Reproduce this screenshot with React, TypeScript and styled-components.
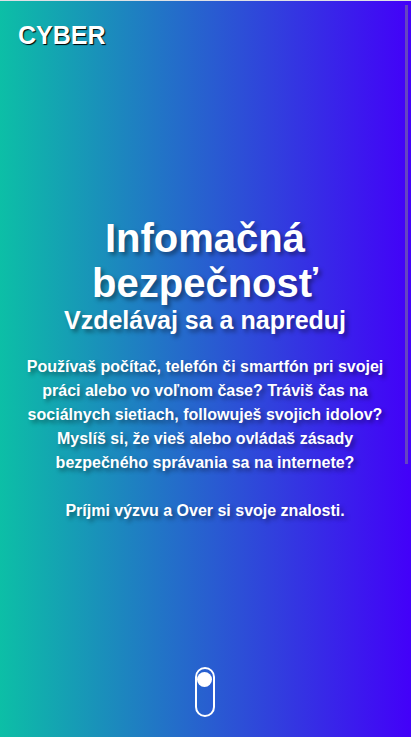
import React from "react";
import styled, { createGlobalStyle } from "styled-components";

const GlobalStyle = createGlobalStyle`
  * { box-sizing: border-box; margin: 0; padding: 0; }
  body { font-family: "Liberation Sans", Arial, sans-serif; color: #fff; }
`;

const Page = styled.div`
  position: relative;
  display: flex;
  flex-direction: column;
  min-height: 100vh;
  padding-right: 1px;
  background: linear-gradient(to right, #0cbfa6, #4300f9);
  border-top: 1px solid #dfe1e5;
`;

const Header = styled.header`
  padding: 19px 18px 21px;
`;

const Logo = styled.a`
  color: #fff;
  font-size: 25px;
  line-height: 30px;
  font-weight: 700;
  text-decoration: none;
  text-shadow: 1px 1px 1px #000;
`;

const Hero = styled.main`
  flex: 1;
  display: flex;
  flex-direction: column;
  align-items: center;
  justify-content: center;
  padding: 0 24px;
  text-align: center;
  text-shadow: 3px 3px 4px rgba(0, 0, 0, 0.4);
`;

const Title = styled.h1`
  font-size: 40px;
  line-height: 45px;
`;

const Subtitle = styled.h2`
  font-size: 25px;
  line-height: 29px;
`;

const Text = styled.p`
  margin-top: 20px;
  font-size: 16px;
  line-height: 24px;
  font-weight: 700;
`;

const Footer = styled.footer`
  display: flex;
  justify-content: center;
  padding-bottom: 20px;
`;

const ScrollCue = styled.a`
  display: block;
  width: 20px;
  height: 50px;
  padding-top: 3px;
  border: 2px solid #fff;
  border-radius: 10px;
`;

const Dot = styled.span`
  display: block;
  width: 15px;
  height: 15px;
  border-radius: 50%;
  background: #fff;
`;

const ScrollThumb = styled.div`
  position: absolute;
  top: 4px;
  right: 3px;
  width: 3px;
  height: 62.3%;
  background: rgba(136, 136, 136, 0.5);
`;

export default function App() {
  return (
    <Page>
      <GlobalStyle />
      <Header>
        <Logo href="#">CYBER</Logo>
      </Header>
      <Hero>
        <Title>Infomačná bezpečnosť</Title>
        <Subtitle>Vzdelávaj sa a napreduj</Subtitle>
        <Text>
          Používaš počítač, telefón či smartfón pri svojej práci alebo vo voľnom čase? Tráviš čas
          na sociálnych sietiach, followuješ svojich idolov? Myslíš si, že vieš alebo ovládaš
          zásady bezpečného správania sa na internete?
          <br />
          <br />
          Príjmi výzvu a Over si svoje znalosti.
        </Text>
      </Hero>
      <Footer>
        <ScrollCue href="#next" aria-label="Ďalej">
          <Dot />
        </ScrollCue>
      </Footer>
      <ScrollThumb />
    </Page>
  );
}
